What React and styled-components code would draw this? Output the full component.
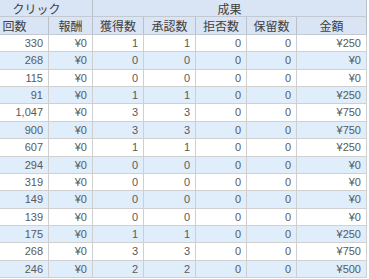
import React from 'react';
import styled, { createGlobalStyle } from 'styled-components';

const GlobalStyle = createGlobalStyle`
  html, body {
    margin: 0;
    padding: 0;
    background: #ffffff;
    overflow: hidden;
  }
`;

const COLS = '68px 44px 51px 52px 51px 50px 70px';

const Table = styled.div`
  margin-left: -19px;
  width: 386px;
  font-family: 'Liberation Sans', 'Noto Sans CJK JP', sans-serif;
`;

const GroupRow = styled.div`
  display: grid;
  grid-template-columns: 112px 274px;
  height: 17.4px;
  box-sizing: border-box;
  background: #d9e4f5;
  border-bottom: 1px solid #c3c9d2;
`;

const HeadRow = styled.div`
  display: grid;
  grid-template-columns: ${COLS};
  height: 17.4px;
  box-sizing: border-box;
  background: #d9e4f5;
  border-bottom: 1px solid #c3c9d2;
`;

const Row = styled.div`
  display: grid;
  grid-template-columns: ${COLS};
  height: 17.4px;
  box-sizing: border-box;
  background: ${(p) => (p.$alt ? '#e0edfb' : '#ffffff')};
  border-bottom: 1px solid #d0d0d0;
`;

const HeadCell = styled.div`
  min-width: 0;
  height: 16.4px;
  border-right: 1px solid #b9c0ca;
  font-family: 'Noto Sans CJK JP', sans-serif;
  font-size: 12px;
  color: #404040;
  line-height: 18px;
  text-align: center;
  white-space: nowrap;
`;

const Cell = styled.div`
  min-width: 0;
  padding-right: 5px;
  border-right: 1px solid #cfcfcf;
  font-size: 11px;
  color: #5a5a5a;
  line-height: 16.4px;
  text-align: right;
  white-space: nowrap;
`;

const rows = [
  ['330', '¥0', 1, 1, 0, 0, '¥250'],
  ['268', '¥0', 0, 0, 0, 0, '¥0'],
  ['115', '¥0', 0, 0, 0, 0, '¥0'],
  ['91', '¥0', 1, 1, 0, 0, '¥250'],
  ['1,047', '¥0', 3, 3, 0, 0, '¥750'],
  ['900', '¥0', 3, 3, 0, 0, '¥750'],
  ['607', '¥0', 1, 1, 0, 0, '¥250'],
  ['294', '¥0', 0, 0, 0, 0, '¥0'],
  ['319', '¥0', 0, 0, 0, 0, '¥0'],
  ['149', '¥0', 0, 0, 0, 0, '¥0'],
  ['139', '¥0', 0, 0, 0, 0, '¥0'],
  ['175', '¥0', 1, 1, 0, 0, '¥250'],
  ['268', '¥0', 3, 3, 0, 0, '¥750'],
  ['246', '¥0', 2, 2, 0, 0, '¥500'],
];

const heads = ['回数', '報酬', '獲得数', '承認数', '拒否数', '保留数', '金額'];

export default function App() {
  return (
    <>
      <GlobalStyle />
      <Table>
        <GroupRow>
          <HeadCell>クリック</HeadCell>
          <HeadCell>成果</HeadCell>
        </GroupRow>
        <HeadRow>
          {heads.map((h) => (
            <HeadCell key={h}>{h}</HeadCell>
          ))}
        </HeadRow>
        {rows.map((r, i) => (
          <Row key={i} $alt={i % 2 === 1}>
            {r.map((v, j) => (
              <Cell key={j}>{v}</Cell>
            ))}
          </Row>
        ))}
      </Table>
    </>
  );
}
